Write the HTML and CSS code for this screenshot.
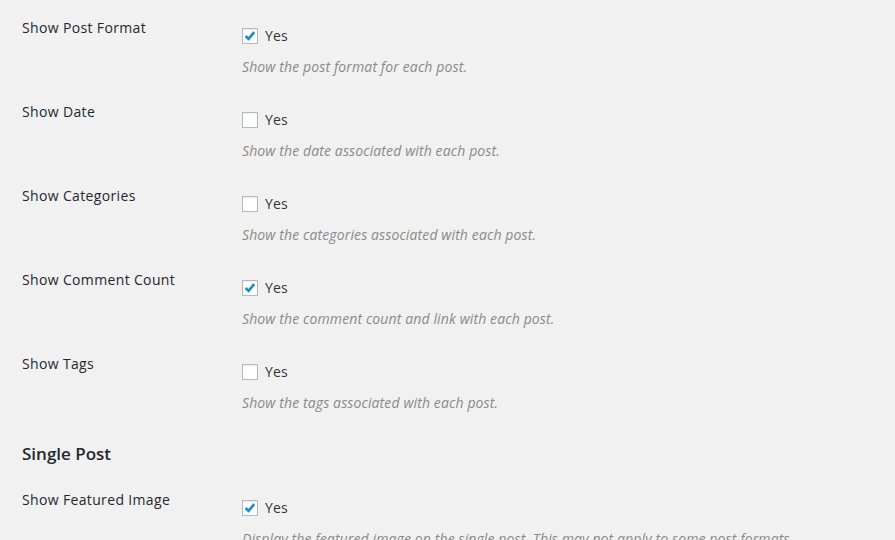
FILE: index.html
```html
<!DOCTYPE html>
<html>
<head>
<meta charset="utf-8">
<link rel="stylesheet" href="styles.css">
</head>
<body>
<div class="wrap">
  <div class="form-table">
    <div class="row">
      <div class="th">Show Post Format</div>
      <div class="td">
        <label class="check"><span class="box checked"><svg viewBox="0 0 16 16"><path d="M3 8 L6.4 11.3 L12.8 3.6" /></svg></span>Yes</label>
        <p class="description">Show the post format for each post.</p>
      </div>
    </div>
    <div class="row">
      <div class="th">Show Date</div>
      <div class="td">
        <label class="check"><span class="box"></span>Yes</label>
        <p class="description">Show the date associated with each post.</p>
      </div>
    </div>
    <div class="row">
      <div class="th">Show Categories</div>
      <div class="td">
        <label class="check"><span class="box"></span>Yes</label>
        <p class="description">Show the categories associated with each post.</p>
      </div>
    </div>
    <div class="row">
      <div class="th">Show Comment Count</div>
      <div class="td">
        <label class="check"><span class="box checked"><svg viewBox="0 0 16 16"><path d="M3 8 L6.4 11.3 L12.8 3.6" /></svg></span>Yes</label>
        <p class="description">Show the comment count and link with each post.</p>
      </div>
    </div>
    <div class="row">
      <div class="th">Show Tags</div>
      <div class="td">
        <label class="check"><span class="box"></span>Yes</label>
        <p class="description">Show the tags associated with each post.</p>
      </div>
    </div>
  </div>
  <h2 class="section-title">Single Post</h2>
  <div class="form-table">
    <div class="row">
      <div class="th">Show Featured Image</div>
      <div class="td">
        <label class="check"><span class="box checked"><svg viewBox="0 0 16 16"><path d="M3 8 L6.4 11.3 L12.8 3.6" /></svg></span>Yes</label>
        <p class="description">Display the featured image on the single post. This may not apply to some post formats.</p>
      </div>
    </div>
  </div>
</div>
</body>
</html>
```

FILE: styles.css
```css
html, body {
  margin: 0;
  padding: 0;
  background: #f1f1f1;
  font-family: "Open Sans", "Noto Sans", sans-serif;
  font-size: 14px;
  color: #23282d;
  overflow: hidden;
}
.wrap {
  padding-left: 22px;
}
.form-table .row {
  display: grid;
  grid-template-columns: 210px 1fr;
  height: 84px;
}
.th {
  padding-top: 18px;
  line-height: 19px;
  font-weight: 400;
  letter-spacing: 0.35px;
  color: #23282d;
}
.td {
  padding: 26px 10px 0 10px;
}
.check {
  display: flex;
  align-items: center;
  height: 20px;
  line-height: 20px;
  color: #32373c;
  letter-spacing: 0.2px;
}
.box {
  width: 16px;
  height: 16px;
  box-sizing: border-box;
  border: 1px solid #b4b9be;
  background: #fff;
  box-shadow: inset 0 1px 2px rgba(0,0,0,0.07);
  margin-right: 7px;
  display: flex;
  align-items: center;
  justify-content: center;
}
.box svg {
  width: 14px;
  height: 14px;
}
.box svg path {
  fill: none;
  stroke: #1e8cbe;
  stroke-width: 3;
  stroke-linecap: butt;
  stroke-linejoin: miter;
}
.description {
  margin: 12px 0 0 0;
  font-size: 14px;
  line-height: 18px;
  font-style: italic;
  letter-spacing: 0.12px;
  color: #8a8a8a;
  white-space: nowrap;
}
.section-title {
  margin: 22px 0 6px 0;
  font-size: 17px;
  line-height: 24px;
  font-weight: 600;
  color: #23282d;
}
```
